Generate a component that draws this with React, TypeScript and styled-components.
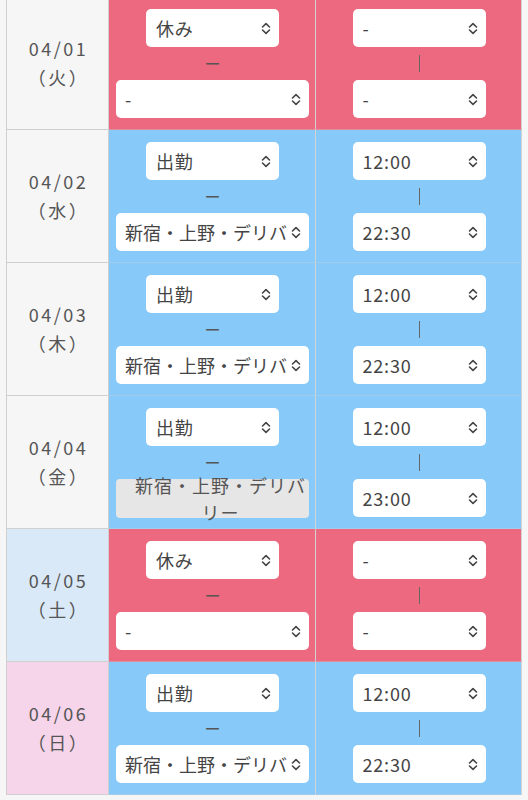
import styled, { createGlobalStyle } from 'styled-components';

const GlobalStyle = createGlobalStyle`
    html, body {
        margin: 0;
        padding: 0;
        background: #f6f6f6;
    }
    body {
        font-family: 'Noto Sans CJK JP', 'Noto Sans', sans-serif;
        color: #555;
    }
`;

type DayKind = 'weekday' | 'sat' | 'sun';
type Status = 'off' | 'work';

interface IShiftRow {
    date: string;
    weekday: string;
    kind: DayKind;
    status: Status;
    place: string;
    placeDisabled?: boolean;
    start: string;
    end: string;
}

const ROWS: IShiftRow[] = [
    { date: '04/01', weekday: '火', kind: 'weekday', status: 'off', place: '-', start: '-', end: '-' },
    { date: '04/02', weekday: '水', kind: 'weekday', status: 'work', place: '新宿・上野・デリバリー', start: '12:00', end: '22:30' },
    { date: '04/03', weekday: '木', kind: 'weekday', status: 'work', place: '新宿・上野・デリバリー', start: '12:00', end: '22:30' },
    { date: '04/04', weekday: '金', kind: 'weekday', status: 'work', place: '新宿・上野・デリバリー', placeDisabled: true, start: '12:00', end: '23:00' },
    { date: '04/05', weekday: '土', kind: 'sat', status: 'off', place: '-', start: '-', end: '-' },
    { date: '04/06', weekday: '日', kind: 'sun', status: 'work', place: '新宿・上野・デリバリー', start: '12:00', end: '22:30' },
];

const DAY_BG: Record<DayKind, string> = {
    weekday: '#f6f6f6',
    sat: '#dae9f7',
    sun: '#f6d4e9',
};

const STATUS_BG: Record<Status, string> = {
    off: '#ec6980',
    work: '#87c9f8',
};

// the list is scrolled a little: the first row starts above the viewport top
const Viewport = styled.div`
    padding: 3px 6px 0;
    height: 797px;
    overflow: hidden;
`;

const Table = styled.div`
    margin-top: -6px;
    width: 516px;
    border-left: 1px solid #cfcfcf;
`;

const Row = styled.div`
    display: grid;
    grid-template-columns: 102px 207px 206px;
    height: 133px;
`;

const DateCell = styled.div<{ $kind: DayKind }>`
    display: flex;
    flex-direction: column;
    align-items: center;
    justify-content: center;
    padding-left: 2px;
    background: ${({ $kind }) => DAY_BG[$kind]};
    border-right: 1px solid #cfcfcf;
    border-bottom: 1px solid #cfcfcf;
    font-size: 18px;
    line-height: 29px;
    letter-spacing: 2.5px;
    color: #555;
`;

const ShiftCell = styled.div<{ $status: Status }>`
    display: flex;
    flex-direction: column;
    align-items: center;
    padding: 12px 6px 0 7px;
    background: ${({ $status }) => STATUS_BG[$status]};
    border-right: 1px solid #d3d3d3;
    border-bottom: 1px solid rgba(210, 210, 210, 0.35);
`;

const Select = styled.div<{ $wide?: boolean }>`
    display: flex;
    align-items: center;
    box-sizing: border-box;
    width: ${({ $wide }) => ($wide ? '193px' : '133px')};
    height: 38px;
    padding: 0 8px 0 ${({ $wide }) => ($wide ? '9px' : '10px')};
    background: #fff;
    border-radius: 5px;
    font-size: 18px;
    color: #444;
    white-space: nowrap;
`;

const SelectText = styled.span<{ $wide?: boolean }>`
    flex: ${({ $wide }) => ($wide ? '0 0 162px' : '1')};
    overflow: hidden;
    letter-spacing: ${({ $wide }) => ($wide ? '0' : '0.8px')};
`;

const Spacer = styled.span`
    flex: 1;
`;

const DisabledSelect = styled.div`
    display: flex;
    align-items: center;
    justify-content: center;
    box-sizing: border-box;
    width: 193px;
    height: 39px;
    padding: 0 0 0 16px;
    background: #e6e6e6;
    border-radius: 4px;
    font-size: 18px;
    line-height: 27px;
    letter-spacing: 1px;
    text-align: center;
    color: #555;
`;

const Dash = styled.div`
    height: 33px;
    line-height: 33px;
    font-size: 16px;
    color: #555;
`;

const VerticalBar = styled.div`
    display: flex;
    align-items: center;
    justify-content: center;
    height: 33px;

    &::before {
        content: '';
        width: 1px;
        height: 17px;
        background: #666;
    }
`;

const Chevron = () => (
    <svg width='10' height='13' viewBox='0 0 10 13' fill='none'>
        <path
            d='M1.5 5 L5 1.6 L8.5 5 M1.5 8 L5 11.4 L8.5 8'
            stroke='#444'
            strokeWidth='1.6'
            strokeLinecap='round'
            strokeLinejoin='round'
        />
    </svg>
);

const SelectBox = ({ value, wide }: { value: string; wide?: boolean }) => (
    <Select $wide={wide}>
        <SelectText $wide={wide}>{value}</SelectText>
        {wide && <Spacer />}
        <Chevron />
    </Select>
);

const ShiftRow = ({ row }: { row: IShiftRow }) => (
    <Row>
        <DateCell $kind={row.kind}>
            <div>{row.date}</div>
            <div>（{row.weekday}）</div>
        </DateCell>
        <ShiftCell $status={row.status}>
            <SelectBox value={row.status === 'off' ? '休み' : '出勤'} />
            <Dash>ー</Dash>
            {row.placeDisabled ? (
                <DisabledSelect>{row.place}</DisabledSelect>
            ) : (
                <SelectBox value={row.place} wide />
            )}
        </ShiftCell>
        <ShiftCell $status={row.status}>
            <SelectBox value={row.start} />
            <VerticalBar />
            <SelectBox value={row.end} />
        </ShiftCell>
    </Row>
);

export default function App() {
    return (
        <>
            <GlobalStyle />
            <Viewport>
                <Table>
                    {ROWS.map((row) => (
                        <ShiftRow key={row.date} row={row} />
                    ))}
                </Table>
            </Viewport>
        </>
    );
}
